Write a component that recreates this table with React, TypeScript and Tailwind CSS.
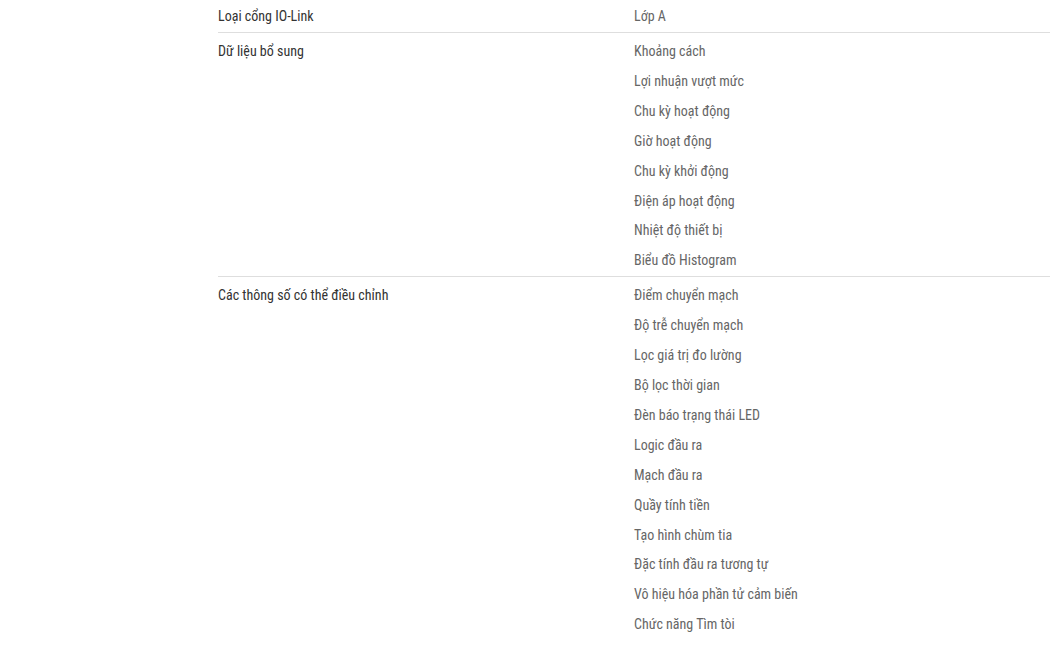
const groups: { label: string; values: string[]; cls: string; lead: string }[] = [
  { label: "Loại cổng IO-Link", values: ["Lớp A"], cls: "pt-px pb-px", lead: "leading-[30px]" },
  {
    label: "Dữ liệu bổ sung",
    values: [
      "Khoảng cách",
      "Lợi nhuận vượt mức",
      "Chu kỳ hoạt động",
      "Giờ hoạt động",
      "Chu kỳ khởi động",
      "Điện áp hoạt động",
      "Nhiệt độ thiết bị",
      "Biểu đồ Histogram",
    ],
    cls: "pt-[4px]",
    lead: "leading-[29.9px]",
  },
  {
    label: "Các thông số có thể điều chỉnh",
    values: [
      "Điểm chuyển mạch",
      "Độ trễ chuyển mạch",
      "Lọc giá trị đo lường",
      "Bộ lọc thời gian",
      "Đèn báo trạng thái LED",
      "Logic đầu ra",
      "Mạch đầu ra",
      "Quầy tính tiền",
      "Tạo hình chùm tia",
      "Đặc tính đầu ra tương tự",
      "Vô hiệu hóa phần tử cảm biến",
      "Chức năng Tìm tòi",
    ],
    cls: "pt-[4px]",
    lead: "leading-[29.9px]",
  },
]

export default function App() {
  return (
    <div className="min-h-screen bg-white pl-[218px] font-['Roboto',sans-serif] text-[14px] [font-stretch:condensed]">
      <div className="w-[832px]">
        {groups.map((g, i) => (
          <div
            key={g.label}
            className={`grid grid-cols-2 ${g.cls} ${i < groups.length - 1 ? "border-b border-[#dedede]" : ""}`}
          >
            <div className={`${g.lead} text-[#333]`}>{g.label}</div>
            <div className="flex flex-col">
              {g.values.map((v) => (
                <div key={v} className={`${g.lead} text-[#666]`}>
                  {v}
                </div>
              ))}
            </div>
          </div>
        ))}
      </div>
    </div>
  )
}
